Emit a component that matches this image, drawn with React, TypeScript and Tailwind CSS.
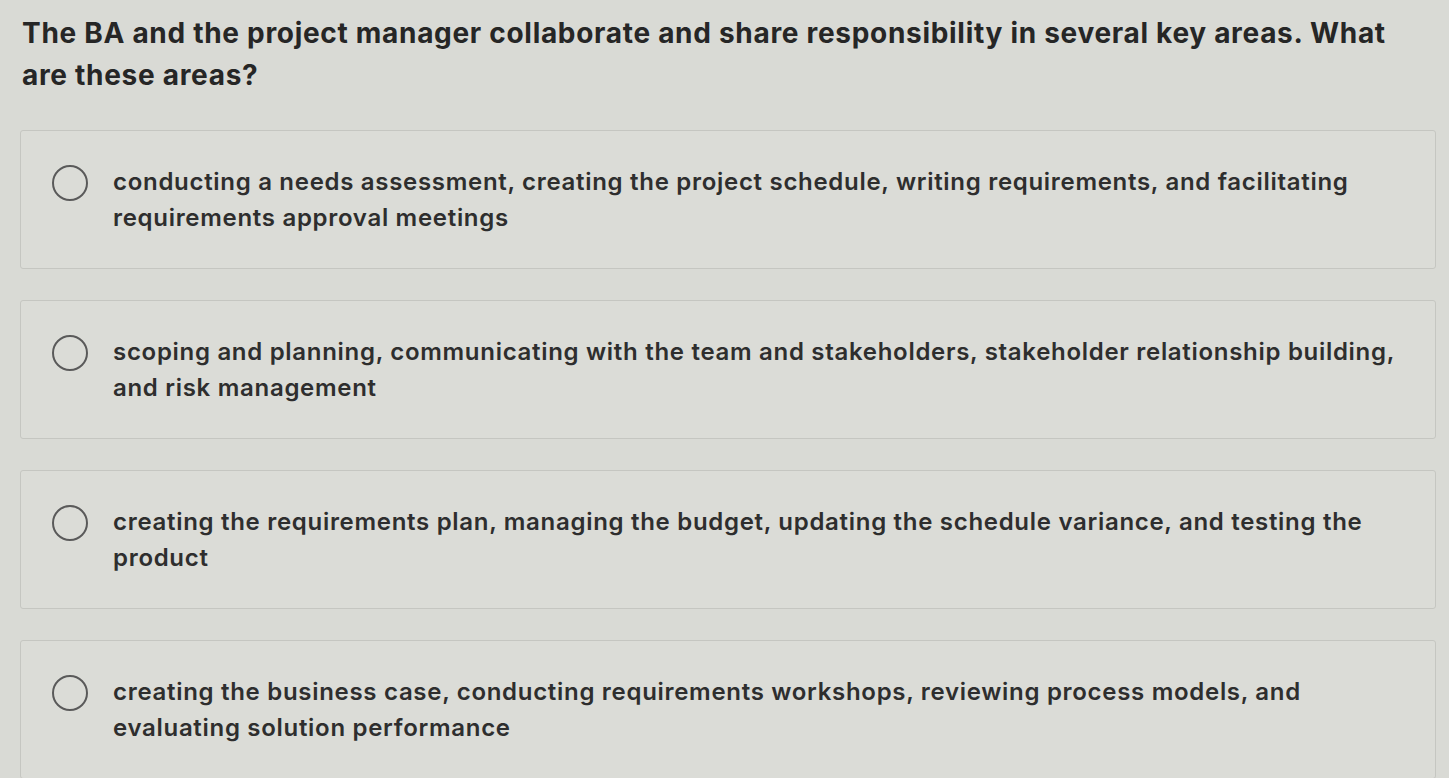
import React from "react";

const options = [
  ["conducting a needs assessment, creating the project schedule, writing requirements, and facilitating", "requirements approval meetings"],
  ["scoping and planning, communicating with the team and stakeholders, stakeholder relationship building,", "and risk management"],
  ["creating the requirements plan, managing the budget, updating the schedule variance, and testing the", "product"],
  ["creating the business case, conducting requirements workshops, reviewing process models, and", "evaluating solution performance"],
];

export default function App() {
  return (
    <div
      className="min-h-[778px] w-full bg-[#d9dad5] text-[#2b2b2b] overflow-hidden"
      style={{ fontFamily: "Inter, 'Liberation Sans', Arial, sans-serif" }}
    >
      <div className="pl-[22px] pr-[20px] pt-[12px] text-[28px] font-bold leading-[42px] tracking-[0.7px] text-[#262626] whitespace-nowrap">
        The BA and the project manager collaborate and share responsibility in several key areas. What
        <br />
        are these areas?
      </div>
      <div className="mt-[34px] ml-[20px] w-[1416px] flex flex-col gap-[31px]">
        {options.map((o, i) => (
          <div
            key={i}
            className="h-[139px] rounded-[3px] border border-[#c5c6c1] bg-[#dbdcd7] flex items-start pl-[31px] pt-[33px]"
          >
            <div className="mt-[1px] w-[36px] h-[36px] shrink-0 rounded-full border-2 border-[#5a5a5a]" />
            <div className="ml-[25px] text-[24px] font-semibold leading-[36px] tracking-[0.7px] text-[#2e2e2e] whitespace-nowrap">
              {o[0]}
              <br />
              {o[1]}
            </div>
          </div>
        ))}
      </div>
    </div>
  );
}
